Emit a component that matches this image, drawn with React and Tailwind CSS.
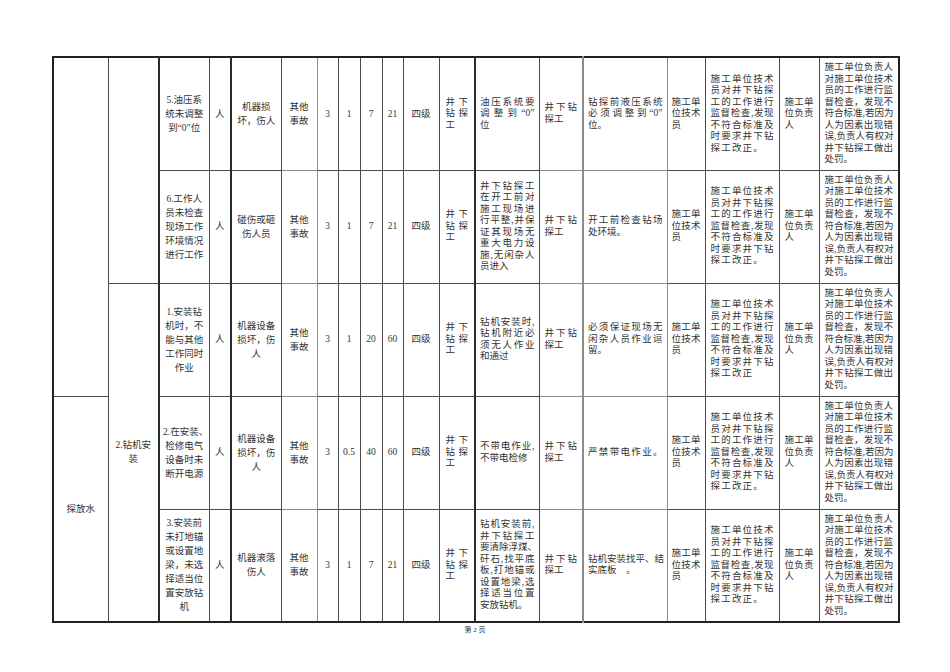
import React from 'react';

const W = [55, 51, 50, 22, 50, 36, 21, 22, 22, 21, 36, 36, 64, 44, 84, 38, 74, 40, 80];

const TECH = ['施工单位技术', '员对井下钻探', '工的工作进行', '监督检查,发现', '不符合标准及', '时要求井下钻', '探工改正。'];
const BOSS = ['施工单位负责人', '对施工单位技术', '员的工作进行监', '督检查，发现不', '符合标准,若因为', '人为因素出现错', '误,负责人有权对', '井下钻探工做出', '处罚。'];

const rows = [
  {
    hazard: ['5.油压系', '统未调整', '到“0”位'],
    result: ['机器损', '坏，伤人'],
    nums: ['3', '1', '7', '21'],
    measure: ['油压系统要', '调整到“0”', '位'],
    rule: ['钻探前液压系统', '必须调整到“0”', '位。'],
    tech: TECH,
  },
  {
    hazard: ['6.工作人', '员未检查', '现场工作', '环境情况', '进行工作'],
    result: ['碰伤或砸', '伤人员'],
    nums: ['3', '1', '7', '21'],
    measure: ['井下钻探工', '在开工前对', '施工现场进', '行平整,并保', '证其现场无', '重大电力设', '施,无闲杂人', '员进入'],
    rule: ['开工前检查钻场', '处环境。'],
    tech: TECH,
  },
  {
    hazard: ['1.安装钻', '机时，不', '能与其他', '工作同时', '作业'],
    result: ['机器设备', '损坏，伤', '人'],
    nums: ['3', '1', '20', '60'],
    measure: ['钻机安装时,', '钻机附近必', '须无人作业', '和通过'],
    rule: ['必须保证现场无', '闲杂人员作业逗', '留。'],
    tech: [...TECH.slice(0, 6), '探工改正'],
  },
  {
    hazard: ['2.在安装、', '检修电气', '设备时未', '断开电源'],
    result: ['机器设备', '损坏，伤', '人'],
    nums: ['3', '0.5', '40', '60'],
    measure: ['不带电作业,', '不带电检修'],
    rule: ['严禁带电作业。'],
    tech: TECH,
  },
  {
    hazard: ['3.安装前', '未打地锚', '或设置地', '梁，未选', '择适当位', '置安放钻', '机'],
    result: ['机器滚落', '伤人'],
    nums: ['3', '1', '7', '21'],
    measure: ['钻机安装前,', '井下钻探工', '要清除浮煤、', '矸石,找平底', '板,打地锚或', '设置地梁,选', '择适当位置', '安放钻机。'],
    rule: ['钻机安装找平、结', '实底板　。'],
    tech: TECH,
  },
];

const Lines = ({ lines, center, loose, track }) => (
  <div className={loose ? 'leading-[14px]' : 'leading-[11.5px]'}>
    {lines.map((l, i) => {
      const last = i === lines.length - 1;
      let cls = 'whitespace-nowrap ';
      if (center) cls += 'text-center';
      else if (last && lines.length > 1) cls += 'text-left';
      else cls += 'text-justify [text-align-last:justify]';
      if (last && track) cls += ' tracking-[1.2px]';
      return (
        <div key={i} className={cls}>
          {l}
        </div>
      );
    })}
  </div>
);

const td = 'border border-[#4a4a4a] align-middle';
const gray = 'border border-[#8c8c8c] align-middle';

const Row = ({ r, i }) => (
  <tr className="h-[113px]">
    {i === 0 && <td rowSpan={3} className={td}></td>}
    {i === 0 && <td rowSpan={2} className={td}></td>}
    {i === 2 && (
      <td rowSpan={3} className={td + ' px-[3px]'}>
        <Lines lines={['2.钻机安', '装']} center loose />
      </td>
    )}
    {i === 3 && (
      <td rowSpan={2} className={td + ' text-center'}>
        探放水
      </td>
    )}
    <td className={td + ' border-l-2 border-l-[#2a2a2a] px-[3px]'}>
      <Lines lines={r.hazard} center loose />
    </td>
    <td className={td + ' text-center'}>人</td>
    <td className={td + ' border-l-2 border-l-[#2a2a2a] px-[3px]'}>
      <Lines lines={r.result} center loose />
    </td>
    <td className={gray + ' px-[3px]'}>
      <Lines lines={['其他', '事故']} center loose />
    </td>
    {r.nums.map((n, k) => (
      <td key={k} className={td + ' text-center'}>
        {n}
      </td>
    ))}
    <td className={td + ' text-center'}>四级</td>
    <td className={td + ' px-[6px]'}>
      <Lines lines={['井下', '钻探', '工']} />
    </td>
    <td className={td + ' border-l-2 border-l-[#2a2a2a] px-[4px]'}>
      <Lines lines={r.measure} />
    </td>
    <td className={gray + ' px-[5px]'}>
      <Lines lines={['井下钻', '探工']} />
    </td>
    <td className={gray + ' border-l-2 px-[4px]'}>
      <Lines lines={r.rule} />
    </td>
    <td className={td + ' px-[4px]'}>
      <Lines lines={['施工单', '位技术', '员']} />
    </td>
    <td className={td + ' px-[5px]'}>
      <Lines lines={r.tech} track />
    </td>
    <td className={td + ' px-[5px]'}>
      <Lines lines={['施工单', '位负责', '人']} />
    </td>
    <td className={td + ' px-[5px]'}>
      <Lines lines={BOSS} />
    </td>
  </tr>
);

export default function App() {
  return (
    <div className="w-[950px] h-[672px] bg-white text-[#333] font-['Liberation_Serif','Noto_Sans_CJK_SC',serif] text-[9.5px] overflow-hidden">
      <div className="pt-[56px] pl-[52px]">
        <table className="table-fixed border-collapse border-2 border-[#222] w-[846px]">
          <colgroup>
            {W.map((w, k) => (
              <col key={k} style={{ width: w }} />
            ))}
          </colgroup>
          <tbody>
            {rows.map((r, i) => (
              <Row key={i} r={r} i={i} />
            ))}
          </tbody>
        </table>
        <div className="w-[846px] text-center text-[7px] leading-[9px] mt-[3px] text-[#333]">第 2 页</div>
      </div>
    </div>
  );
}
